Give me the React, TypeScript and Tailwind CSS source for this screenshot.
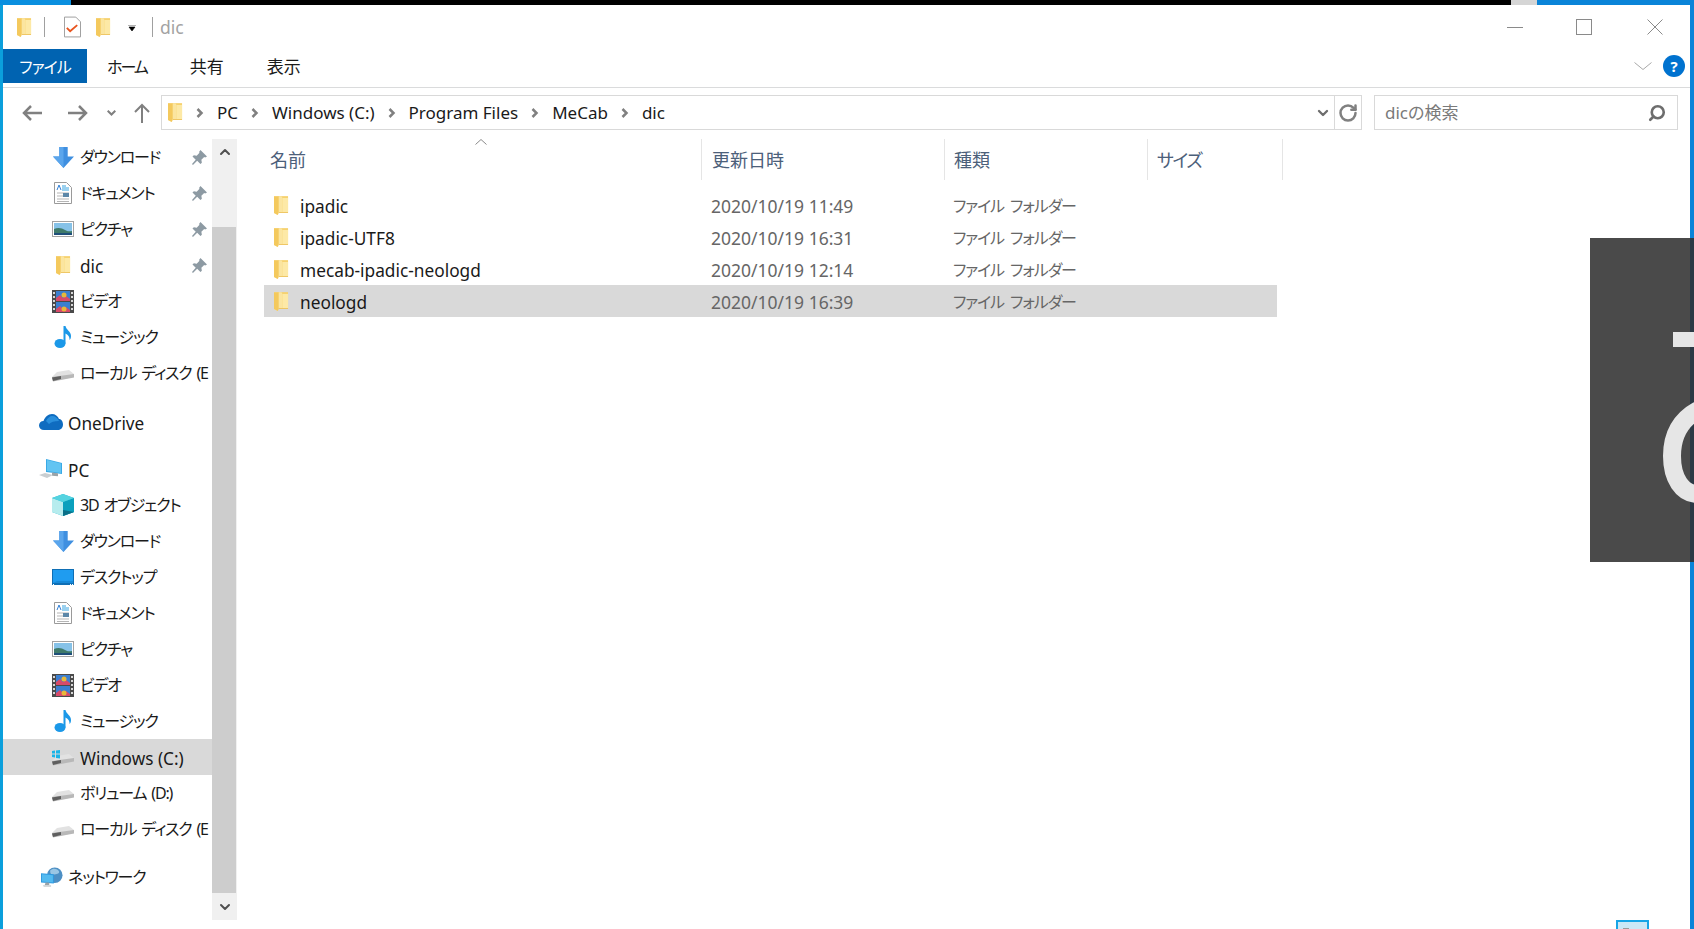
import React from "react";
import { ChevronDown, ChevronUp, RotateCw, Search } from "lucide-react";

const UI = "font-['Noto_Sans','Noto_Sans_CJK_JP',sans-serif] [font-feature-settings:'palt']";

const FolderIcon = ({ className = "" }: { className?: string }) => (
  <svg viewBox="0 0 16 22" className={className}>
    <path d="M4 1h11v17H4z" fill="#f6d26f" />
    <path d="M0 1h8l1 2v15H4v3l-4-2z" fill="#fbe5a0" />
    <path d="M9 3h6v15H9z" fill="#fde9a6" />
    <path d="M0 1h5v18l-1 2-4-2z" fill="#f4c95d" />
    <path d="M5 18h10v1H5z" fill="#eec45c" />
  </svg>
);

const DownArrowIcon = () => (
  <svg viewBox="0 0 20 20" className="size-[21px]">
    <path d="M6 0h8v9h6L10 20 0 9h6z" fill="#3f8fe0" />
    <path d="M6 0h4v20L0 9h6z" fill="#5aa5ec" />
  </svg>
);

const DocIcon = () => (
  <svg viewBox="0 0 18 22" className="h-[22px] w-[18px]">
    <path d="M.5.5h12l5 5v16H.5z" fill="#fff" stroke="#9a9a9a" />
    <path d="M3 11h12M3 14h12M3 17h12M3 19.5h12" stroke="#b5b5b5" />
    <path d="M3 8l2-5 2 5" fill="none" stroke="#2f7fd6" />
    <path d="M8 4h4M8 6h7M8 8h7" stroke="#36a3e0" />
    <rect x="9" y="11" width="6" height="4" fill="#5c87a8" />
  </svg>
);

const PictureIcon = () => (
  <svg viewBox="0 0 22 16" className="h-[16px] w-[22px]">
    <rect x=".5" y=".5" width="21" height="15" fill="#fff" stroke="#a3a3a3" />
    <rect x="2" y="2" width="18" height="12" fill="#86c2e8" />
    <path d="M2 8c4-2 8-1 11 1s5 1 7 1v4H2z" fill="#3f7a6a" />
    <path d="M2 12h18v2H2z" fill="#1f4f7a" />
  </svg>
);

const VideoIcon = () => (
  <svg viewBox="0 0 22 23" className="h-[23px] w-[22px]">
    <rect width="22" height="23" fill="#4a4a4a" />
    <rect x="4" y="1" width="14" height="10" fill="#3b7fd0" />
    <rect x="4" y="12" width="14" height="10" fill="#3b7fd0" />
    <path d="M4 8l4-3 3 3 3-2 4 3v2H4zM4 19l4-3 3 3 3-2 4 3v2H4z" fill="#d84a6a" />
    <circle cx="12" cy="5" r="2.5" fill="#e8b83a" />
    <circle cx="12" cy="19" r="2.5" fill="#e8b83a" />
    <path d="M1 2h2v2H1zM1 6h2v2H1zM1 10h2v2H1zM1 14h2v2H1zM1 18h2v2H1zM19 2h2v2h-2zM19 6h2v2h-2zM19 10h2v2h-2zM19 14h2v2h-2zM19 18h2v2h-2z" fill="#d8d8d8" />
  </svg>
);

const MusicIcon = () => (
  <svg viewBox="0 0 18 22" className="h-[22px] w-[18px]">
    <ellipse cx="6" cy="17.5" rx="5.5" ry="4.5" fill="#1b98e8" />
    <path d="M9.5 0h2c.5 4 5.5 5 5.5 10 0 2-.5 3-1.500 4 .3-3-1-5-4-6.500V17.500H9.500z" fill="#1b98e8" />
  </svg>
);

const DriveIcon = ({ windows = false }: { windows?: boolean }) => (
  <svg viewBox="0 0 22 18" className="mt-[4px] h-[18px] w-[22px]">
    <path d="M5 6l12-2 5 4v3L1 15 0 11z" fill="#e2e2e2" />
    <path d="M0 11l22-3v3.500L1 15.500z" fill="#b8b8b8" />
    <path d="M0 11.500l9-1.500v3l-8 2z" fill="#5f5f5f" />
    {windows && <path d="M0 1l3-.5V3.500H0zM4 .4l4-.4V3.500H4zM0 4.500h3v3l-3-.5zM4 4.500h4v4l-4-.5z" fill="#19b4e8" />}
  </svg>
);

const CloudIcon = () => (
  <svg viewBox="0 0 24 16" className="h-[16px] w-[24px]">
    <path d="M5 16c-3 0-5-2-5-4.500S2 7 4.500 7C6 3 9 0 13 0c3 0 6 2 7 5 2.500 0 4 2.500 4 5.500S22 16 19 16z" fill="#0f6cc0" />
    <path d="M7 7c1.500-3 4-5 6-5 3 0 6 2 7 5-5 0-8 1-10 3z" fill="#2a8fdc" />
  </svg>
);

const PcIcon = () => (
  <svg viewBox="0 0 24 20" className="h-[20px] w-[24px]">
    <path d="M7 0l16 4v11L7 13z" fill="#39a9e6" />
    <path d="M8 1l14 3.500v9.500L8 12z" fill="#62c4f2" />
    <path d="M13 13.500l6 .8v3l-6-.5z" fill="#9aa3a8" />
    <path d="M0 16l6-2 8 2-6 3z" fill="#c9ced1" />
  </svg>
);

const CubeIcon = () => (
  <svg viewBox="0 0 22 22" className="size-[22px]">
    <path d="M11 0l11 4v14l-11 4L0 18V4z" fill="#25b8cd" />
    <path d="M0 4l11 4v14L0 18z" fill="#b6ecee" />
    <path d="M11 8l11-4v14l-11 4z" fill="#0aa0bd" />
    <path d="M0 4l11-4 11 4-11 4z" fill="#55d3e0" />
    <path d="M11 16l11 2-11 4z" fill="#0a6f87" />
  </svg>
);

const DesktopIcon = () => (
  <svg viewBox="0 0 22 16" className="h-[16px] w-[22px]">
    <rect width="22" height="16" fill="#0f6fb5" />
    <rect x="1" y="1" width="20" height="13" fill="#1f9cf0" />
    <path d="M1 14l4-2h16v2z" fill="#1689d8" />
    <path d="M1 15h1v1H1zM18 15h1v1h-1zM20 15h1v1h-1z" fill="#fff" />
  </svg>
);

const NetworkIcon = () => (
  <svg viewBox="0 0 24 22" className="h-[22px] w-[22px]">
    <circle cx="15" cy="9" r="8.500" fill="#4d8fc4" />
    <path d="M10 4c3-3 7-2 9 0s0 4-3 4-6 2-6-4z" fill="#9ac6e4" />
    <path d="M0 7l14 1v10l-14-1z" fill="#2e9ae0" />
    <path d="M1 8l12 1v8L1 16z" fill="#53baf0" />
    <path d="M5 17h4v3H4z" fill="#9aa3a8" />
    <path d="M2 20h9v1.500H3z" fill="#c9ced1" />
  </svg>
);

const PinIcon = () => (
  <svg viewBox="0 0 16 16" className="size-[15px]">
    <path d="M9 0l7 7-2 1-1-.5-3 3 .5 3-1.500 1.500-3.500-3.500L1 16l-1-1 4-4.500L.5 7 2 5.500l3 .5 3-3L7.500 2z" fill="#8d9aa3" />
  </svg>
);

type NavRow = { icon: React.ReactNode; label: string; pinned?: boolean; selected?: boolean };

const quickAccess: NavRow[] = [
  { icon: <DownArrowIcon />, label: "ダウンロード", pinned: true },
  { icon: <DocIcon />, label: "ドキュメント", pinned: true },
  { icon: <PictureIcon />, label: "ピクチャ", pinned: true },
  { icon: <FolderIcon className="h-[21px] w-[15px]" />, label: "dic", pinned: true },
  { icon: <VideoIcon />, label: "ビデオ" },
  { icon: <MusicIcon />, label: "ミュージック" },
  { icon: <DriveIcon />, label: "ローカル ディスク (E" },
];

const pcItems: NavRow[] = [
  { icon: <CubeIcon />, label: "3D オブジェクト" },
  { icon: <DownArrowIcon />, label: "ダウンロード" },
  { icon: <DesktopIcon />, label: "デスクトップ" },
  { icon: <DocIcon />, label: "ドキュメント" },
  { icon: <PictureIcon />, label: "ピクチャ" },
  { icon: <VideoIcon />, label: "ビデオ" },
  { icon: <MusicIcon />, label: "ミュージック" },
  { icon: <DriveIcon windows />, label: "Windows (C:)", selected: true },
  { icon: <DriveIcon />, label: "ボリューム (D:)" },
  { icon: <DriveIcon />, label: "ローカル ディスク (E" },
];

const files = [
  { name: "ipadic", date: "2020/10/19 11:49" },
  { name: "ipadic-UTF8", date: "2020/10/19 16:31" },
  { name: "mecab-ipadic-neologd", date: "2020/10/19 12:14" },
  { name: "neologd", date: "2020/10/19 16:39", selected: true },
];

// kana runs wide in Noto compared to the reference, latin runs narrow
const labelClass = (label: string) =>
  /^[A-Za-z]/.test(label) ? "pt-[3px] text-[17.2px]" : "text-[16px] tracking-[-1.2px] [word-spacing:2px]";

const NavItem = ({ icon, label, pinned, selected }: NavRow) => (
  <div className={`flex h-9 items-center ${selected ? "bg-[#d9d9d9]" : ""}`}>
    <div className="ml-[48px] flex w-[24px] shrink-0 justify-center">{icon}</div>
    <span className={`ml-[5px] whitespace-nowrap ${labelClass(label)}`}>{label}</span>
    {pinned && (
      <div className="ml-auto mr-[5px]">
        <PinIcon />
      </div>
    )}
  </div>
);

const NavRoot = ({ icon, label, className = "" }: { icon: React.ReactNode; label: string; className?: string }) => (
  <div className={`flex h-9 items-center ${className}`}>
    <div className="flex w-[60px] shrink-0 justify-end">{icon}</div>
    <span className={`ml-[5px] whitespace-nowrap ${labelClass(label)}`}>{label}</span>
  </div>
);

const Crumb = ({ label }: { label: string }) => (
  <>
    <svg viewBox="0 0 8 10" className="mx-[13px] h-[10px] w-[8px]">
      <path d="M1.500 1l4 4-4 4" fill="none" stroke="#808080" strokeWidth="2.500" />
    </svg>
    <span>{label}</span>
  </>
);

export default function App() {
  return (
    <div className={`relative flex h-screen w-screen flex-col overflow-hidden bg-white text-[16px] text-[#1a1a1a] ${UI}`}>
      <div className="flex h-[5px] shrink-0">
        <div className="w-[71px] bg-[#0a8fdf]" />
        <div className="flex-1 bg-black" />
        <div className="w-[26px] bg-[#d5d5d5]" />
        <div className="w-[157px] bg-[#0a84d8]" />
      </div>

      <div className="flex min-h-0 flex-1">
        <div className="w-[3px] bg-[#0b9fdc]" />

        <div className="flex min-w-0 flex-1 flex-col">
          {/* title bar */}
          <div className="flex h-[44px] items-center">
            <FolderIcon className="ml-[14px] h-[21px] w-[15px]" />
            <div className="ml-[12px] h-[20px] w-px bg-[#a0a0a0]" />
            <svg viewBox="0 0 18 22" className="ml-[19px] h-[22px] w-[17px]">
              <path d="M.5.5h12l5 5v16H.5z" fill="#fff" stroke="#9a9a9a" />
              <path d="M3 12l3.500 3.500L14 9" fill="none" stroke="#e8541e" strokeWidth="2" />
            </svg>
            <FolderIcon className="ml-[15px] h-[21px] w-[15px]" />
            <svg viewBox="0 0 8 6" className="ml-[17px] mt-[2px] h-[6px] w-[8px]">
              <path d="M0 0h8M1 2h6l-3 4z" fill="#000" stroke="#000" strokeWidth=".6" />
            </svg>
            <div className="ml-[16px] h-[20px] w-px bg-[#a0a0a0]" />
            <span className="ml-[7px] pt-[1px] text-[17.5px] text-[#a3a3a3]">dic</span>
            <div className="ml-auto mr-[27px] flex items-center">
              <svg viewBox="0 0 16 16" className="size-[16px]">
                <path d="M0 8.500h16" stroke="#8a8a8a" />
              </svg>
              <svg viewBox="0 0 16 16" className="ml-[53px] size-[16px]">
                <rect x=".5" y=".5" width="15" height="15" fill="none" stroke="#8a8a8a" />
              </svg>
              <svg viewBox="0 0 16 16" className="ml-[55px] size-[16px]">
                <path d="M.5.5l15 15M15.500.5l-15 15" stroke="#8a8a8a" />
              </svg>
            </div>
          </div>

          {/* ribbon tabs */}
          <div className="flex h-[34px] items-center">
            <div className="flex h-full w-[84px] items-center justify-center bg-[#0063b1] pt-[2px] tracking-[-1px] text-white">ファイル</div>
            <span className="ml-[20px] pt-[2px] tracking-[-2px]">ホーム</span>
            <span className="ml-[43px] pt-[2px] text-[17px]">共有</span>
            <span className="ml-[43px] pt-[2px] text-[17px]">表示</span>
            <svg viewBox="0 0 18 8" className="ml-auto h-[8px] w-[18px]">
              <path d="M.5.5L9 7.500 17.500.5" fill="none" stroke="#a8a8a8" />
            </svg>
            <div className="ml-[11px] mr-[5px] flex size-[22px] items-center justify-center rounded-full bg-[#0072cf] text-[15px] font-bold text-white">?</div>
          </div>
          <div className="mt-[4px] h-px bg-[#dadbdc]" />

          {/* address row */}
          <div className="mt-[7px] flex h-[35px] items-center text-[17px]">
            <svg viewBox="0 0 20 16" className="ml-[19px] h-[16px] w-[20px]">
              <path d="M20 8H2M9 1L2 8l7 7" fill="none" stroke="#808080" strokeWidth="2.500" />
            </svg>
            <svg viewBox="0 0 20 16" className="ml-[26px] h-[16px] w-[20px]">
              <path d="M0 8h18M11 1l7 7-7 7" fill="none" stroke="#808080" strokeWidth="2.500" />
            </svg>
            <svg viewBox="0 0 9 6" className="ml-[19px] h-[6px] w-[9px]">
              <path d="M.7.7l3.800 3.800L8.300.7" fill="none" stroke="#808080" strokeWidth="2" />
            </svg>
            <svg viewBox="0 0 16 20" className="ml-[18px] h-[20px] w-[16px]">
              <path d="M8 20V2M1 9l7-7 7 7" fill="none" stroke="#808080" strokeWidth="2" />
            </svg>
            <div className="ml-[11px] flex h-full w-[1201px] items-center border border-[#d9d9d9]">
              <FolderIcon className="ml-[6px] h-[21px] w-[15px]" />
              <div className="flex items-center">
                <Crumb label="PC" />
                <Crumb label="Windows (C:)" />
                <Crumb label="Program Files" />
                <Crumb label="MeCab" />
                <Crumb label="dic" />
              </div>
              <ChevronDown className="ml-auto mr-[3px] size-[16px] text-[#6d6d6d]" strokeWidth={3.500} />
              <div className="flex h-full w-[27px] items-center justify-center border-l border-[#d9d9d9]">
                <RotateCw className="size-[20px] text-[#808080]" strokeWidth={3} />
              </div>
            </div>
            <div className="ml-[12px] flex h-full w-[304px] items-center justify-between border border-[#d9d9d9] pl-[10px] pr-[11px] text-[17px] text-[#7a7a7a]">
              <span>dicの検索</span>
              <Search className="size-[18px] -scale-x-100 text-[#6d6d6d]" strokeWidth={3.500} />
            </div>
          </div>

          <div className="mt-[9px] flex min-h-0 flex-1">
            {/* navigation pane */}
            <div className="w-[209px] shrink-0 overflow-hidden">
              {quickAccess.map((row, i) => (
                <NavItem key={i} {...row} />
              ))}
              <NavRoot className="mt-[13px]" icon={<CloudIcon />} label="OneDrive" />
              <NavRoot className="mt-[11px]" icon={<PcIcon />} label="PC" />
              {pcItems.map((row, i) => (
                <NavItem key={i} {...row} />
              ))}
              <NavRoot className="mt-[12px]" icon={<NetworkIcon />} label="ネットワーク" />
            </div>

            {/* scrollbar */}
            <div className="flex h-[781px] w-[25px] shrink-0 flex-col bg-[#f0f0f0]">
              <div className="flex h-[22px] items-start justify-center pt-[5px]">
                <ChevronUp className="size-[16px] text-[#505050]" strokeWidth={3} />
              </div>
              <div className="mt-[66px] mr-[1px] h-[666px] bg-[#cdcdcd]" />
              <div className="flex flex-1 items-center justify-center">
                <ChevronDown className="size-[16px] text-[#505050]" strokeWidth={3} />
              </div>
            </div>

            {/* file list */}
            <div className="relative ml-[27px] min-w-0 flex-1">
              <div className="flex h-[41px] text-[18px] text-[#4c607a]">
                <div className="w-[438px] border-r border-[#e5e5e5] pl-[6px] pt-[8px]">名前</div>
                <div className="w-[243px] border-r border-[#e5e5e5] pl-[10px] pt-[8px]">更新日時</div>
                <div className="w-[203px] border-r border-[#e5e5e5] pl-[9px] pt-[8px]">種類</div>
                <div className="w-[135px] border-r border-[#e5e5e5] pl-[9px] pt-[8px] tracking-[-1.5px]">サイズ</div>
              </div>
              <div className="mt-[9px] w-[1013px]">
                {files.map((f) => (
                  <div key={f.name} className={`flex h-[32px] items-center ${f.selected ? "bg-[#d9d9d9]" : ""}`}>
                    <FolderIcon className="ml-[10px] h-[21px] w-[15px]" />
                    <span className="ml-[11px] w-[411px] whitespace-nowrap pt-[3px] text-[17.3px]">{f.name}</span>
                    <span className="w-[242px] pt-[2px] text-[17.5px] text-[#666666]">{f.date}</span>
                    <span className="pt-[2px] tracking-[-1.1px] text-[#666666] [word-spacing:3px]">ファイル フォルダー</span>
                  </div>
                ))}
              </div>
              {/* sort caret */}
              <svg viewBox="0 0 12 6" className="absolute left-[211px] top-[0px] h-[6px] w-[12px]">
                <path d="M.5 5.500L6 .5l5.500 5" fill="none" stroke="#8a8a8a" />
              </svg>
            </div>
          </div>
        </div>

        <div className="w-[4px] bg-[#0a84d8]" />
      </div>

      {/* dark window peeking over the explorer */}
      <div className="absolute left-[1590px] top-[238px] h-[324px] w-[104px] overflow-hidden bg-[#4a4a4a]">
        <div className="absolute right-0 top-0 h-full w-[4px] bg-[#2b3a45]" />
        <svg viewBox="0 0 104 324" className="absolute inset-0 size-full">
          <path d="M83 94h21v15H83z" fill="#e6e6e6" />
          <path d="M108 172C90 182 82 198 82 218C82 240 92 256 108 256" fill="none" stroke="#e6e6e6" strokeWidth="18" />
        </svg>
      </div>

      {/* taskbar thumbnail edge */}
      <div className="absolute left-[1616px] top-[920px] h-[20px] w-[33px] border-2 border-[#17a5e6] bg-[#cbe8f6]">
        <div className="ml-[5px] mt-[6px] h-[4px] w-[6px] bg-[#9a9a9a]" />
      </div>
    </div>
  );
}
